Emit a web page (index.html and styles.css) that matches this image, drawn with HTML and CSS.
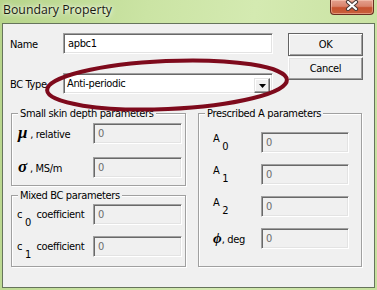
FILE: index.html
```html
<!DOCTYPE html>
<html>
<head>
<title>Boundary Property</title>
<link rel="stylesheet" href="styles.css">
</head>
<body>

<div class="window">
  <div class="titlebar">
    <span class="title">Boundary Property</span>
    <span class="close">
      <svg width="14" height="11" viewBox="0 0 14 11">
        <path d="M3 2 L11 9 M11 2 L3 9" stroke="#4a3a36" stroke-width="4.2" stroke-linecap="round"/>
        <path d="M3 2 L11 9 M11 2 L3 9" stroke="#fff" stroke-width="2.2" stroke-linecap="round"/>
      </svg>
    </span>
  </div>

  <div class="client">
    <div class="top">
      <div class="fields">
        <div class="field">
          <span class="lbl">Name</span>
          <div class="edit">apbc1</div>
        </div>
        <div class="field">
          <span class="lbl">BC Type</span>
          <div class="edit combo">
            <span>Anti-periodic</span>
            <span class="drop">
              <svg width="7" height="4" viewBox="0 0 7 4"><path d="M0 0 H7 L3.5 4 Z" fill="#000"/></svg>
            </span>
          </div>
        </div>
      </div>
      <div class="buttons">
        <div class="btn default">OK</div>
        <div class="btn">Cancel</div>
      </div>
    </div>

    <div class="groups">
      <div class="col-left">
        <div class="group skin">
          <div class="group-title">Small skin depth parameters</div>
          <div class="row first">
            <span class="lbl wide"><b class="greek">&mu;</b> , relative</span>
            <div class="edit off">0</div>
          </div>
          <div class="row">
            <span class="lbl wide"><b class="greek">&sigma;</b> , MS/m</span>
            <div class="edit off">0</div>
          </div>
        </div>

        <div class="group mixed">
          <div class="group-title">Mixed BC parameters</div>
          <div class="row first">
            <span class="lbl wide">c <span class="idx">0</span>&nbsp; coefficient</span>
            <div class="edit off">0</div>
          </div>
          <div class="row">
            <span class="lbl wide">c <span class="idx">1</span>&nbsp; coefficient</span>
            <div class="edit off">0</div>
          </div>
        </div>
      </div>

      <div class="group prescribed">
        <div class="group-title">Prescribed A parameters</div>
        <div class="row first">
          <span class="lbl narrow">A <span class="idx">0</span></span>
          <div class="edit off">0</div>
        </div>
        <div class="row">
          <span class="lbl narrow">A <span class="idx">1</span></span>
          <div class="edit off">0</div>
        </div>
        <div class="row">
          <span class="lbl narrow">A <span class="idx">2</span></span>
          <div class="edit off">0</div>
        </div>
        <div class="row">
          <span class="lbl phi-lbl"><b class="greek phi">&#981;</b>, deg</span>
          <div class="edit off">0</div>
        </div>
      </div>
    </div>
  </div>
</div>

<!-- hand drawn marker round the BC type combo -->
<svg class="mark" width="377" height="290" viewBox="0 0 377 290">
  <ellipse cx="167" cy="85" rx="120" ry="24" transform="rotate(-2.5 167 85)"
           fill="none" stroke="#7e0a1c" stroke-width="4"/>
</svg>

</body>
</html>
```

FILE: styles.css
```css
BODY {
    margin : 0;
    width : 377px;
    height : 290px;
    overflow : hidden;
    background : #bcd891;
    font-family : "DejaVu Sans Condensed", "Liberation Sans", Arial, sans-serif;
    font-size : 11px;
    letter-spacing : -0.35px;
    color : #000;
}

.window {
    height : 290px;
    display : flex;
    flex-direction : column;
    background : linear-gradient(100deg, #b6d48a 0%, #cbe4a4 35%, #d4eab1 60%, #c6e09e 100%);
}

/* title bar */
.titlebar {
    height : 23px;
    display : flex;
    align-items : flex-start;
    flex : none;
}
.title {
    font-family : "Open Sans", "Noto Sans", sans-serif;
    font-size : 12.3px;
    letter-spacing : 0;
    line-height : 16px;
    margin : 2px 0 0 3px;
    color : #1a1a10;
    text-shadow : 0 0 6px rgba(255,255,255,0.9), 0 0 3px rgba(255,255,255,0.8);
}
.close {
    margin-left : auto;
    margin-right : 3px;
    width : 44px;
    height : 15px;
    box-sizing : border-box;
    border : 1px solid #6a2e22;
    border-top : none;
    border-radius : 0 0 4px 4px;
    background : linear-gradient(#e4a08e 0%, #d9846c 45%, #c6522f 55%, #c8603c 100%);
    box-shadow : inset 0 0 0 1px rgba(255,220,200,0.45);
    display : flex;
    justify-content : center;
    align-items : flex-start;
}
.close svg {
    display : block;
}

/* client area */
.client {
    flex : none;
    height : 265px;
    box-sizing : border-box;
    margin : 0 2px;
    border : 1px solid #66745c;
    background : #f0f0f0;
}

.top {
    display : flex;
    padding : 9px 0 0 7px;
}
.fields {
    width : 263px;
}
.field {
    display : flex;
    align-items : center;
    height : 21px;
}
.field + .field {
    margin-top : 19px;
}
.field .lbl {
    width : 53px;
    padding-top : 2px;
}

.buttons {
    margin-left : 15px;
    display : flex;
    flex-direction : column;
    gap : 1px;
}
.btn {
    width : 75px;
    height : 23px;
    box-sizing : border-box;
    border : 1px solid;
    border-color : #fff #696969 #696969 #fff;
    box-shadow : inset -1px -1px 0 #a0a0a0, inset 1px 1px 0 #e3e3e3;
    display : flex;
    align-items : center;
    justify-content : center;
}
.btn.default {
    border-color : #646464;
    box-shadow : inset 1px 1px 0 #fff, inset -1px -1px 0 #a0a0a0;
}

/* sunken edit boxes */
.edit {
    box-sizing : border-box;
    height : 21px;
    width : 210px;
    border : 1px solid;
    border-color : #a0a0a0 #fff #fff #a0a0a0;
    box-shadow : inset 1px 1px 0 #696969, inset -1px -1px 0 #e3e3e3;
    background : #fff;
    padding : 3px 0 0 4px;
    line-height : 13px;
    white-space : nowrap;
}
.combo {
    display : flex;
    padding-left : 3px;
    padding-right : 2px;
}
.combo span:first-child {
    flex : 1;
}
.drop {
    width : 16px;
    height : 15px;
    margin-top : 1px;
    box-sizing : border-box;
    border : 1px solid;
    border-color : #e3e3e3 #696969 #696969 #e3e3e3;
    box-shadow : inset -1px -1px 0 #a0a0a0, inset 1px 1px 0 #fff;
    background : #f0f0f0;
    display : flex;
    align-items : center;
    justify-content : center;
}
.edit.off {
    background : #f0f0f0;
    color : #6d6d6d;
}

/* group boxes */
.groups {
    display : flex;
    gap : 12px;
    padding-left : 8px;
    margin-top : 19px;
}
.group {
    box-sizing : border-box;
    border : 1px solid #a0a0a0;
    box-shadow : inset 1px 1px 0 #fff, 1px 1px 0 #fff;
}
.group-title {
    width : fit-content;
    margin : -7px 0 0 6px;
    padding : 0 2px;
    line-height : 13px;
    background : #f0f0f0;
}
.skin {
    width : 175px;
    height : 73px;
}
.mixed {
    width : 175px;
    height : 72px;
    margin-top : 9px;
}
.prescribed {
    width : 164px;
    height : 154px;
}

.row {
    display : flex;
    align-items : center;
    height : 21px;
    margin-top : 11px;
}
.skin .row {
    margin-top : 13px;
    padding-left : 6px;
}
.mixed .row {
    padding-left : 5px;
}
.skin .row.first {
    margin-top : 3px;
}
.mixed .row.first {
    margin-top : 2px;
}
.prescribed .row {
    padding-left : 14px;
}
.prescribed .row.first {
    margin-top : 12px;
}

.lbl.wide {
    width : 76px;
    white-space : nowrap;
}
.skin .lbl.wide {
    width : 75px;
}
.lbl.narrow {
    width : 48px;
    margin-top : -8px;
}
.lbl.phi-lbl {
    width : 48px;
}
.row .edit {
    width : 89px;
}
.prescribed .row .edit {
    width : 88px;
}

.idx {
    position : relative;
    top : 8px;
}
.greek {
    font-family : "Liberation Serif", "DejaVu Serif", serif;
    font-style : italic;
    font-weight : bold;
    font-size : 17px;
    line-height : 13px;
    letter-spacing : 0;
}
.phi {
    font-size : 15px;
}

.mark {
    position : absolute;
    left : 0;
    top : 0;
    pointer-events : none;
}
```
